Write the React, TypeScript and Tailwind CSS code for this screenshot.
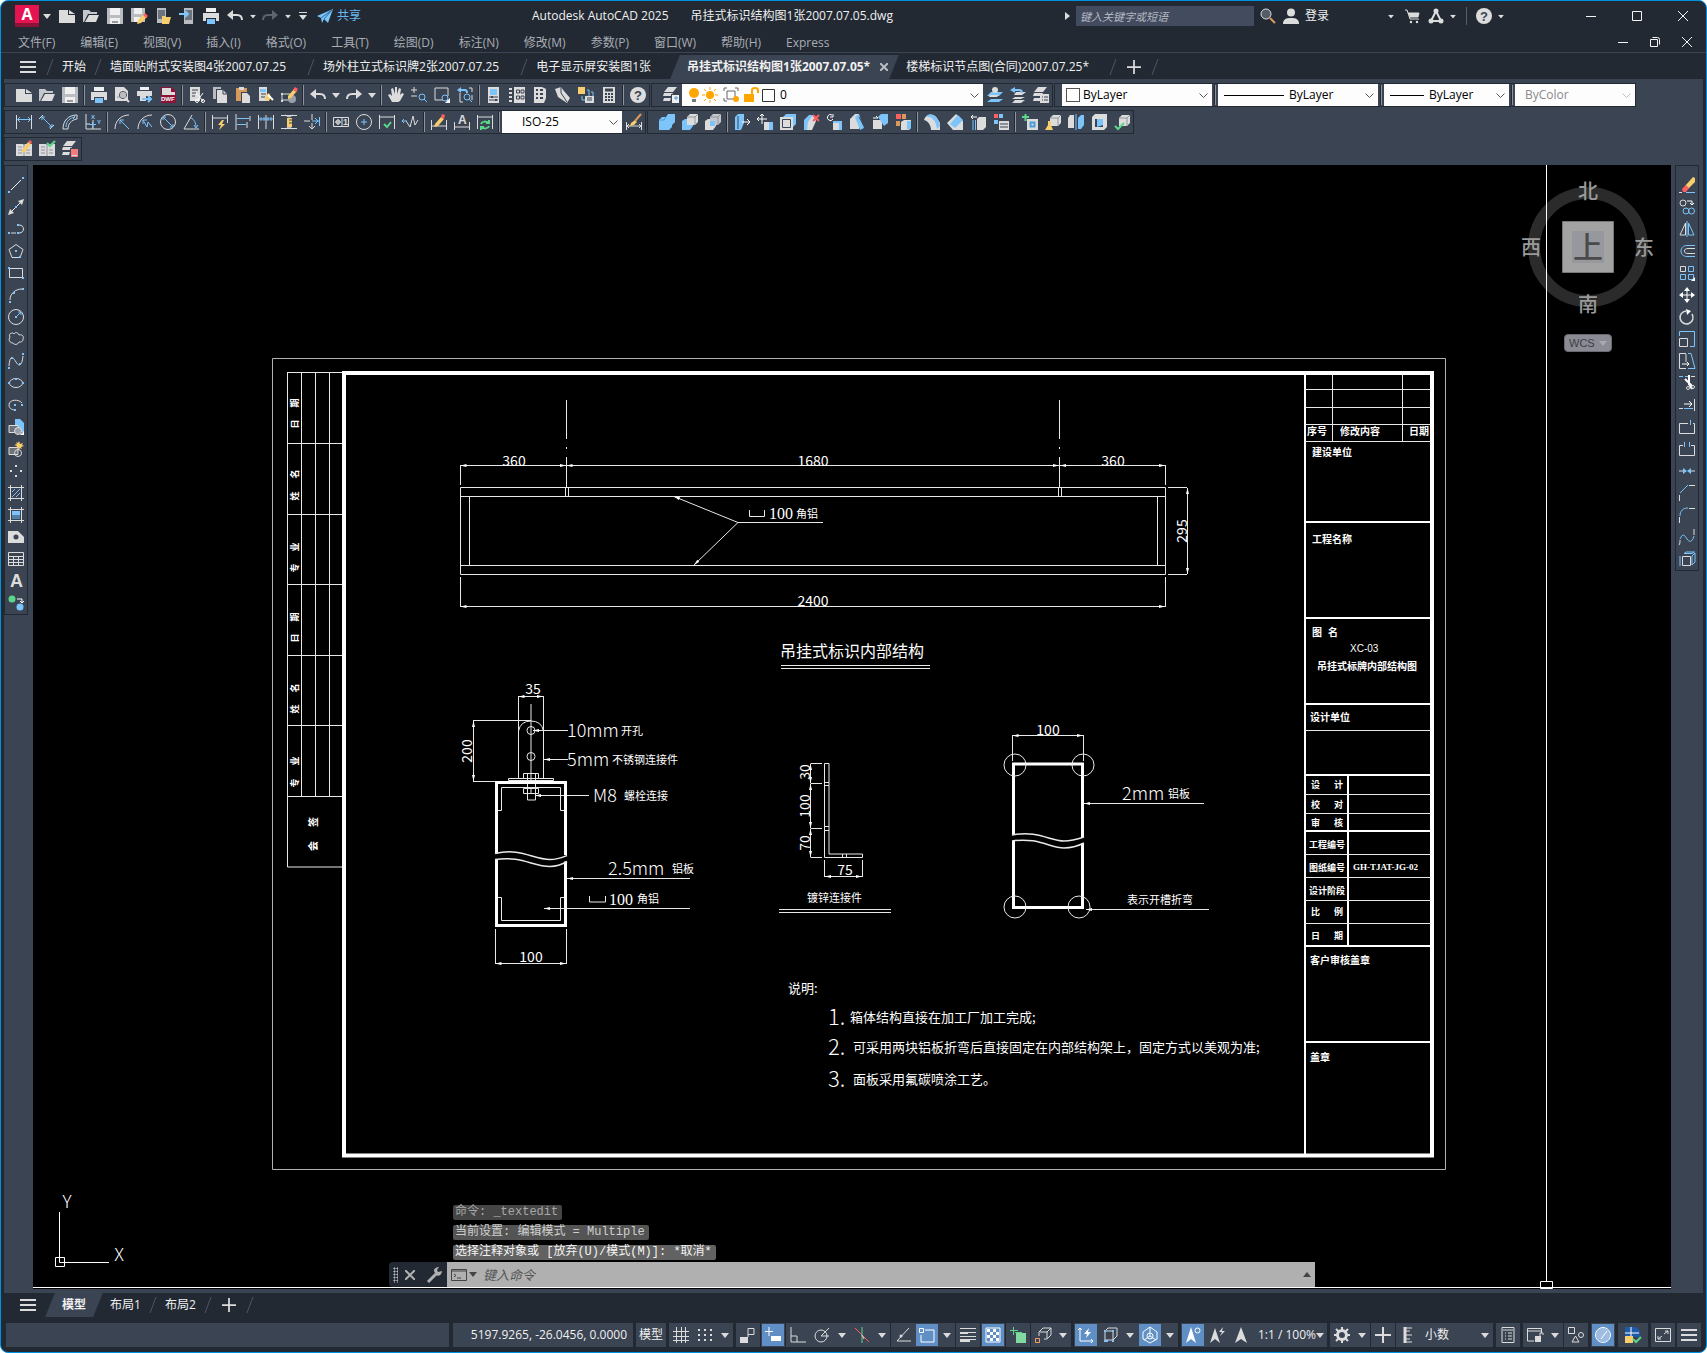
import React from "react";

const W = "#dcdcdc";
const B = "#7cc4fa";
const Y = "#f8cd6c";
const G = "#5bd68a";
const R = "#ff5f5f";
const D = "#3b4453";
const M = "#8f949c";

// s = stroked path, f = filled path, t = letter (text, color, size, x, y)
type Shape =
  | ["s", string, string?, number?]
  | ["f", string, string?]
  | ["t", string, string, number, number, number];

const circ = (x: number, y: number, r: number) =>
  `M${x - r} ${y}a${r} ${r} 0 1 0 ${r * 2} 0a${r} ${r} 0 1 0 ${-r * 2} 0z`;
const dot = (x: number, y: number) => `M${x - 1} ${y - 1}h2v2h-2z`;

const cubeBack: Shape[] = [
  ["f", "M5 4l3-3h8v8l-3 3H5z", W],
  ["s", "M5 4h8v8M13 4l3-3", M],
];
const sheets: Shape[] = [
  ["f", "M5 0h9l-4 5H1z", W],
  ["f", "M1 6h9l-2 3H0z", W],
  ["f", "M1 11h7l-1 3H0z", W],
];

const icons: Record<string, Shape[]> = {
  menu: [["s", "M0 3h16M0 8h16M0 13h16", W, 2]],
  new: [["f", "M0 2h9v5h7v8H0z"], ["f", "M10 2l6 4h-6z"]],
  open: [["f", "M0 2h6l2 2h6v2H5L1 14H0z", "#c4c7cb"], ["f", "M6 7h10l-3 7H2z"]],
  save: [["f", "M0 0h16v16H0z", "#b9bcc1"], ["f", "M3 0h10v7H3z", "#f0f0f0"], ["f", "M3 10h10v6H3z", "#f0f0f0"], ["s", "M5 14h6", D]],
  saveas: [["f", "M0 0h14v14H0z", "#b9bcc1"], ["f", "M3 0h8v6H3z", "#f0f0f0"], ["f", "M3 9h6v5H3z", "#f0f0f0"], ["f", "M7 12l6-6 3 3-6 6-4 1z", Y], ["f", "M12 7l2-2 3 3-2 2z", R]],
  openMobile: [["f", "M2 0h9v15H2z", "#b9bcc1"], ["f", "M3 2h7v9H3z", "#6d737c"], ["f", "M7 8h3l1 1h5l-2 7H7z", Y]],
  saveMobile: [["f", "M5 0h9v16H5z", "#b9bcc1"], ["f", "M6 2h7v10H6z", "#6d737c"], ["s", "M0 6h8M6 3l3 3-3 3", B, 2]],
  print: [["f", "M3 0h10v4H3z", "#f0f0f0"], ["f", "M0 5h16v8h-3v-3H3v3H0z", W], ["f", "M4 11h8v5H4z", B]],
  preview: [["f", "M1 0h9l4 4v10H1z"], ["s", "M3 10h3", M], ["s", circ(9, 8, 3.5), D, 1], ["f", circ(9, 8, 3), "#b9bcc1"], ["s", "M11 11l4 4", W, 2]],
  publish: [["f", "M3 0h9v3H3z", "#f0f0f0"], ["f", "M0 4h15v5H0z"], ["f", "M3 9h6v5H3z"], ["s", "M5 12h8M11 9l3 3-3 3", B, 2]],
  dwf: [["f", "M1 0h10l5 4v12H1z", "#8c1236"], ["f", "M2 1h9v4h4v3H2z", W], ["t", "DWF", "#fff", 6, 1, 14]],
  undo: [["s", "M4 7h6c3 0 5 2 5 5", W, 2], ["f", "M0 7l6-5v10z"]],
  redo: [["s", "M12 7H6c-3 0-5 2-5 5", "currentColor", 2], ["f", "M16 7l-6-5v10z", "currentColor"]],
  send: [["f", "M0 8L16 1l-5 14-4-4-2 4-1-5z", B], ["s", "M4 10L15 2 7 11", "#2b6c9c"]],
  search: [["f", circ(6, 6, 5), "#565c66"], ["s", circ(6, 6, 5), W], ["s", "M10 10l5 5", "#d79a5a", 2]],
  user: [["f", circ(8, 4.5, 4)], ["f", "M0 16c0-5 3-6 8-6s8 1 8 6z"]],
  cart: [["s", "M1 2h2l3 9h9M4 5h11l-1 4H5", W, 1], ["f", "M4 5h11l-1 4H6z"], ["f", circ(7, 14, 1.2)], ["f", circ(13, 14, 1.2)]],
  app: [["s", "M8 3L3 13h10zM8 3l5 10", W, 2], ["f", circ(8, 3, 2.5)], ["f", circ(3, 13, 2.5)], ["f", circ(13, 13, 2.5)]],
  help: [["f", circ(8, 8, 8)], ["t", "?", D, 13, 4, 13]],
  cut: [["f", "M1 0h10v14H1z"], ["s", "M3 3h6M3 6h4M3 9h3", D], ["s", "M7 6l7 8M14 6l-6 8", "#fff"], ["s", circ(14, 14, 1.5) + circ(8, 14, 1.5), "#fff"]],
  copy: [["f", "M1 0h8v2H4v10H1z", "#b9bcc1"], ["f", "M5 3h6l4 4v9H5z"], ["s", "M11 3v4h4", D]],
  paste: [["f", "M1 1h11v4H6v9H1z", "#d79a5a"], ["f", "M4 0h5v3H4z"], ["f", "M7 6h5l3 3v7H7z"]],
  match: [["f", "M1 0h8v8h2v6H1z"], ["f", "M2 2h6v3H2z", B], ["s", "M3 7h5M3 10h4", D], ["f", "M8 8l3-2 2 4-2 4-4-1z", Y], ["s", "M10 8l5 5", "#fff", 2]],
  block: [["s", "M1 7h8v6H1z", W], ["f", dot(1, 14) + dot(1, 7)], ["f", circ(11, 12, 4), "#9ba0a8"], ["f", "M7 9l6-7 3 2-6 7-3 1z", Y], ["f", "M12 3l2-3 3 2-2 3z", R]],
  pan: [["f", "M4 15L0 8l2-1 2 2-1-7 2-1 2 6V0h2v7l2-6 2 1-1 6 2-2 2 1-4 7-2 1z"]],
  zoomRt: [["s", "M3 0v6M0 3h6M0 9h6", W], ["s", circ(11, 10, 3), B], ["s", "M13 12l3 3", B]],
  zoomWin: [["s", "M1 13V1h13v8M1 13h8", W], ["s", circ(11, 11, 3), B], ["s", "M13 13l2 2", B], ["f", "M16 11v5h-5z", "#fff"]],
  zoomPrev: [["s", "M3 6v9h3M12 1h3v4M15 8v5", W], ["s", circ(10, 10, 3), B], ["s", "M12 12l3 3", B], ["s", "M2 3h6c2 0 2 2 2 3", B, 2], ["f", "M0 3l4-3v6z", B]],
  props: [["f", "M2 0h11v16H2z"], ["f", "M4 2h7v6H4z", B], ["s", "M3 10h9M3 13h9", D], ["s", "M6 9v2M10 12v2", D, 2]],
  design: [["f", "M5 0h11v16H5zM0 1h3v2H0zM0 5h3v2H0zM0 9h3v2H0zM0 13h3v2H0z"], ["s", "M7.500 3h3v3h-3zM12 3h3v3h-3zM7.500 9h3v3h-3zM12 9h3v3h-3z", D]],
  palette: [["f", "M2 0h8l4 2v9l-2 5H2z"], ["s", "M4 3h2M8 3h3M4 7h2M8 7h3M4 11h2M8 11h3", D, 2]],
  sheetSet: [["f", "M0 2l6-2 3 4 6 7-3 5-9-6z"], ["s", "M6 0v6l6 9", D]],
  markup: [["f", "M0 0h7v7H0z", Y], ["s", "M9 3h2v6M13 5h2v4M4 9v4h3", B], ["f", "M7 9h9v7H7z"], ["s", "M9 11h5M9 13h5", D]],
  calc: [["f", "M2 0h12v16H2z"], ["s", "M4 3h8", D, 3], ["s", "M4 7h2M7 7h2M10 7h2M4 10h2M7 10h2M10 10h2M4 13h2M7 13h2M10 13h2", D, 2]],

  layerProps: [...sheets, ["f", "M8 7h8v9H8z", D], ["f", "M9 8h7v8H9z", "#f0f0f0"], ["s", "M11 11h4M13 9v4", "#4d9bd6"]],
  layerMake: [["f", "M4 5h12l-4 4H0zM4 12h12l-4 3H0z", B], ["f", circ(8, 3, 3)], ["f", "M3 8h9l-2 2H2z"]],
  layerPrev: [["f", "M6 5h10l-4 3H4zM5 10h10l-4 2H2zM5 13h10l-4 3H2z"], ["s", "M3 3h6c3 0 3 2 3 3", B, 2], ["f", "M0 3l5-3v6z", B]],
  layerState: [...sheets, ["f", "M7 7h9v9H7z"], ["s", "M9 10h1M11 10h4M9 13h1M11 13h4", D]],

  dimLinear: [["s", "M.5 1v14M15.500 1v14", W], ["s", "M2 5.500h12M4 3L1.500 5.500 4 8M12 3l2.500 2.500L12 8", B]],
  dimAligned: [["s", "M0 5l4-4M11 15l4-4", W], ["s", "M3 3l10 10M3 6V3h3M13 10v3h-3", B]],
  dimArc: [["s", "M1 15h5M1 15C1 7 6 1 15 1v4M6 15c0-5 3-9 9-10", W], ["s", "M4 13C4 7 8 4 13 3M11 1l2 2-2 2", B]],
  dimOrd: [["s", "M1 0v15h15M8 6v9M1 10h4", W], ["t", "X", B, 6, 6, 5], ["t", "Y", B, 6, 12, 10], ["s", "M4 10.500h7M7.500 8v6", B]],
  dimRadius: [["s", "M1 15C1 7 7 1 15 1", W], ["s", "M6 6l9 9M6 10V6h4", B]],
  dimJog: [["s", "M1 15C1 7 7 1 15 1", W], ["s", "M6 6l4 7 1-5 4 5M6 10V6h4", B]],
  dimDia: [["s", circ(8, 8, 7.5), W], ["s", "M3 3l10 10M3 6V3h3M13 10v3h-3", B]],
  dimAngle: [["s", "M9 1L1 15h15", W], ["s", "M8 4c3 1 5 5 5 9M11 11l2 3 2-3", B]],
  dimQuick: [["s", "M.5 1v14M15.500 1v8M1 4h14", W], ["f", "M10 6l-4 5h3l-2 5 6-6h-3l2-4z", Y]],
  dimBase: [["s", "M1 0v16M15 2v5M12 8v6", W], ["s", "M2 4.500h12M2 10.500h9", B]],
  dimCont: [["s", "M.5 1v14M8 1v14M15.500 1v14", W], ["s", "M1 5h14M3 3v4M6 3v4M10 3v4M13 3v4", B]],
  dimSpace: [["s", "M0 1.500h16M0 14.500h16M4 1l4 2 4-2M4 15l4-2 4 2", W], ["f", "M6 4h5v9H6z", Y], ["s", "M8 6h3M8 9h3", D]],
  dimBreak: [["s", "M8 0v6M8 9v6M0 7h6M5 12l3 3 3-3", W], ["s", "M8 7h7M11 4l3 3-3 3M15.500 3v9", B]],
  tol: [["s", "M.5 3.500h15v9H.5zM9 4v8", W], ["s", circ(5, 8, 2) + "M5 5v6M2 8h6", W], ["t", "1", W, 9, 10, 11]],
  center: [["s", circ(8, 8, 7.5), W], ["s", "M8 5v6M5 8h6", B]],
  inspect: [["s", "M.5 1v14M15.500 1v14M1 3h14", W], ["s", "M5 10l3 3 4-5", G, 2]],
  jogLine: [["s", "M4 7l4 6 3-11 2 9 3-5", W], ["s", "M0 7h5M2 5L0 7l2 2", B]],
  dimEdit: [["s", "M.5 6v10M15.500 6v10M1 12h14", W], ["f", "M4 10l6-7 3 2-6 7-4 1z", Y], ["f", "M10 3l1-3 3 1-1 4z", R]],
  dimTedit: [["s", "M.5 8v8M15.500 8v8M1 13h14", W], ["t", "A", W, 12, 4, 10]],
  dimUpdate: [["s", "M.5 1v14M15.500 1v14M1 3h14", W], ["s", "M4 10c1-3 5-3 8-1M12 12c-1 3-5 3-8 1M12 6v3H9M4 16v-3h3", G, 2]],
  dimStyle: [["s", "M.5 8v8M15.500 8v8M1 12h14M3 10l-2 2 2 2M13 10l2 2-2 2", W], ["f", "M5 9l4-3 2 2-3 3-4 1z", Y], ["s", "M9 7l6-7", "#d79a5a", 2]],

  union: [["f", "M0 6l3-3h4l2-3h7v8l-3 3v2l-3 3H0z", B], ["s", "M0 6h5l2-3", "#4d9bd6"]],
  subtract: [["f", "M0 7l3-2h8v7l-3 4H0z", B], ["f", "M5 3l3-3h8v8l-3 3H5z", W], ["s", "M5 3h8v8M13 3l3-3", M]],
  intersect: [["f", "M0 7l3-2h8v7l-3 4H0z", W], ["f", "M5 3l3-3h8v8l-3 3H5z", "#c4c7cb"], ["s", "M5 3h8v8M13 3l3-3", M], ["f", "M5 7h5v5H5z", B]],
  extrude: [["f", "M1 3l3-3h6v9l-3 7H1z", B], ["s", "M4 2v13", D], ["s", "M8 8h7M13 5l3 3-3 3", "#fff"]],
  moveFace: [["f", "M7 8h8v8H7z", W], ["f", "M12 8h4v8h-4z", B], ["s", "M5 0v10M0 5h10M3 2l2-2 2 2M2 3L0 5l2 2", "#fff"]],
  offsetFace: [["f", "M3 3l3-3h10v10l-3 3z", B], ["f", "M0 3h13v13H0z", W], ["s", "M2.500 5.500h8v8h-8z", D]],
  deleteFace: [["f", "M1 6l5-5h4l-2 15H1z", B], ["f", "M5 8l5-7 3 6-4 9H4z", W], ["s", "M10 1l6 6M16 1l-6 6", R, 2]],
  rotateFace: [["s", "M6 1a3 3 0 1 0 1 4M7 0v3H4", "#fff"], ["f", "M7 7h9v9H7z", B], ["f", "M7 9h6v7H7z", W]],
  taperFace: [["f", "M1 5l5-5h4v15H1z", W], ["f", "M6 3l4-3 5 14-4 2z", B], ["s", "M10 3l5 9", D]],
  copyFace: [["f", "M1 6h9v9H1z", W], ["f", "M6 3l3-3h7v9l-4 3z", B], ["s", "M1 4h5M4 2l2 2", "#fff"]],
  colorFace: [["f", "M1 0h5v5H1z", R], ["f", "M7 0h4v5H7zM1 7h4v5H1z", "#d79a5a"], ["f", "M6 8l3-2h7v8l-2 2H6z", W], ["f", "M12 7h4v7l-4 2z", B]],
  filletEdge: [["f", "M0 6c2-7 10-7 13-2l3 5v7H7C7 11 4 7 0 6z", W], ["f", "M2 3c6-1 10 4 11 12l3-3C15 5 10-1 4 1z", B]],
  chamferEdge: [["f", "M0 9l9-9 7 7v9H6z", W], ["f", "M3 10L11 1l5 5-8 8z", B]],
  copyEdge: [["s", "M1 3h6M3 1L1 3l2 2", "#fff"], ["f", "M7 5l2-2h7v10l-3 3H7z", W], ["s", "M3 6v10M5.500 6v10", B]],
  colorEdge: [["f", "M1 0h4v4H1z", R], ["f", "M6 0h4v4H6zM1 6h4v4H1z", B], ["f", "M6 7h10v9H6z", W], ["s", "M7 10h8M7 13h8", D]],
  imprint: [["f", "M5 5h11v11H5z", W], ["s", "M8.500 8.500h4v4h-4z", "#4d9bd6", 2], ["s", "M0 3h7M3.500 0v7", G, 2]],
  clean: [...cubeBack, ["f", "M3 7h3v4l2 5H0l3-5z", Y]],
  separate: [["f", "M0 4l2-3h4v13H0z", W], ["f", "M10 4l3-3h3v10l-3 4h-3z", B], ["s", "M8 0v16", B]],
  shell: [["f", "M1 3l3-3h12v13l-3 3H1z", W], ["f", "M4 5h8v8H4z", D], ["f", "M6 5h6v6l-6 2z", B]],
  check: [...cubeBack, ["s", "M1 12l3 3 6-6", G, 2]],
  refEdit: [["f", "M0 3h7l1 1 1-1h7v12H0z", W], ["s", "M8 4v11M2 6h4M2 9h4M2 12h4M10 9h4M10 12h4", M], ["f", "M6 9l6-8 3 2-6 8-3 1z", Y], ["f", "M12 1l2-2 2 2-1 2z", R]],
  refSave: [["f", "M0 3h7l1 1 1-1h7v12H0z", W], ["s", "M8 4v11M2 6h4M2 9h4M2 12h4M10 9h4M10 12h4", M], ["s", "M8 2l3 3 5-5", G, 2]],
  refDiscard: [...sheets, ["f", "M8 7h8v9H8z", D], ["f", "M9 8h7v8H9z", "#f47c7c"], ["s", "M10 14.500h5", W]],

  line: [["s", "M3 13L13 3", "#f0f0f0"], ["f", dot(1, 15) + dot(15, 1), B]],
  xline: [["s", "M1 15L15 1", "#f0f0f0"], ["f", "M16 0l-2 6-4-4zM0 16l2-6 4 4z"], ["f", dot(8, 8), B]],
  pline: [["s", "M3 12h5M11 4c6 0 6 8 0 8", W], ["f", dot(1, 12) + dot(10, 12) + dot(10, 4), B]],
  polygon: [["s", "M8 1.500l7 5-3 8H4l-3-8z"], ["f", dot(8, 8) + dot(12, 14), B]],
  rect: [["s", "M1.500 3.500h13v9h-13z"], ["f", dot(1, 3) + dot(15, 13), B]],
  arc: [["s", "M2 13c0-6 5-11 12-11"], ["f", dot(2, 15) + dot(6, 6) + dot(15, 2), B]],
  circle: [["s", circ(8, 8, 7.5)], ["f", dot(8, 8), B], ["s", "M9 7l4-4M10 3h3v3", B]],
  cloud: [["s", "M2 6c-2-4 3-5 4-3 1-2 4-2 5 1 4-1 5 2 4 4 0 3-2 3-4 3-1 3-5 3-6 1-3 0-5-3-3-6z"]],
  spline: [["s", "M1 13c1-12 4-9 7-4s6 4 7-6"], ["f", dot(1, 15) + dot(4, 5) + dot(12, 11) + dot(15, 1), B]],
  ellipse: [["s", "M1.500 8a6.500 4.500 0 1 0 13 0a6.500 4.500 0 1 0-13 0"], ["f", dot(1, 8) + dot(15, 8) + dot(8, 4), B]],
  ellArc: [["s", "M14 6C11 2 1 2 1 8c0 4 4 5 6 5"], ["f", dot(14, 8) + dot(7, 8) + dot(7, 13), B]],
  insert: [["f", "M7 0h5l4 4v9H7z", B], ["f", "M1 6h9v8H1z", "#6d737c"], ["s", "M1 6.500h9v7H1z", W], ["f", circ(10, 12, 3.5), "#9ba0a8"], ["s", circ(10, 12, 3.5), W], ["f", "M16 12v4h-4z", "#fff"]],
  makeBlock: [["f", "M1 6h9v8H1z", "#6d737c"], ["s", "M1 6.500h9v7H1z", W], ["s", circ(10, 12, 3.5), W], ["f", "M11 0l1 3 3-1-1 2 2 1-3 1 1 2-2-1-1 2-1-3-2 1 1-2-3-1 3-1-1-2 2 1z", Y]],
  point: [["f", dot(8, 3) + dot(3, 8) + dot(13, 8) + dot(8, 13)]],
  hatch: [["s", "M0 2.500h16M0 13.500h16M2.500 0v16M13.500 0v16"], ["s", "M4 7l3-3M4 12l8-8M8 12l4-4", B]],
  gradient: [["f", "M4 4h8v4H4z", B], ["f", "M4 8h8v4H4z", "#527ea8"], ["s", "M0 2.500h16M0 13.500h16M2.500 0v16M13.500 0v16"]],
  region: [["f", "M0 2h10l6 6v6H0z"], ["f", circ(8, 8, 2.5), D]],
  table: [["s", "M.5 1.500h15v13H.5zM1 5.500h14M1 8.500h14M1 11.500h14M5.500 5v9M10.500 5v9"]],
  mtext: [["t", "A", W, 18, 2, 14]],
  addSel: [["f", circ(4, 4, 3.5), G], ["f", circ(12, 12, 3.5), B], ["s", "M9 4h5v4M12 6l2 2 2-2", "#fff"]],

  erase: [["f", "M6 9l8-9 2 1v4l-7 7z", Y], ["f", "M3 12l4-4 3 3-3 4H4z", R], ["s", "M0 15.500h3", W], ["s", "M7 15.500h9", B]],
  copyObj: [["s", circ(4, 4, 3), W], ["s", "M8 2h5v4M11 4l2 2 2-2", "#fff"], ["s", circ(7, 12, 3) + circ(12.5, 12, 3), B]],
  mirror: [["s", "M6.500 2v12H1z", W], ["s", "M9.500 2v12H15z", B], ["s", "M8 0v16", B]],
  offset: [["s", "M16 2.500H8c-8 0-8 11 0 11h8", B], ["s", "M16 5.500H9c-5 0-5 5 0 5h7", W]],
  array: [["s", "M1.500 1.500h5v5h-5z", W], ["s", "M9.500 1.500h5v5h-5zM1.500 9.500h5v5h-5zM9.500 9.500h5v5h-5z", B], ["f", "M16 12v4h-4z", "#fff"]],
  move: [["s", "M8 1v14M1 8h14", "#fff"], ["f", "M8 0l3 4H5zM8 16l3-4H5zM0 8l4-3v6zM16 8l-4-3v6z", "#fff"]],
  rotate: [["s", "M7 2a6.500 6.500 0 1 0 6 3", W, 1.5], ["f", "M7 0l5 2-4 4z", "#fff"]],
  scale: [["s", "M.5 5V.5h15v15H11", B], ["s", "M.5 7.500h8v8h-8z", W]],
  stretch: [["s", "M7 .5H.5v15H7M7 1v8", W], ["s", "M9 .5h3l4 15H9", B], ["s", "M3 11h7M8 9l2 2-2 2", "#fff"]],
  trim: [["s", "M0 1.500h4M6 1.500h3", B], ["s", "M12 1.500h4", W], ["s", "M10 0v9l3 5M6 4l7 7", "#fff", 2], ["s", circ(14, 12, 1.5) + circ(9, 13, 1.5), W]],
  extend: [["s", "M15.500 2v12M0 11.500h4", W], ["s", "M5 11.500h9", B], ["s", "M5 7h8M10 4l3 3-3 3", "#fff"]],
  breakAt: [["s", "M9 4.500H.5v10h15v-10H14", W], ["s", "M11.500 1v5", B]],
  breakObj: [["s", "M4 4.500H.5v10h15v-10H12", W], ["s", "M5.500 1v5M10.500 1v5", B]],
  join: [["s", "M0 8h5M11 8h5", W], ["f", "M4 5l4 3-4 3zM12 5L8 8l4 3z", B]],
  chamfer: [["s", "M.5 16v-6M10 .5h6", W], ["s", "M1 8l8-8", B]],
  fillet: [["s", "M.5 16v-6M10 1.500h6", W], ["s", "M1 9c0-5 3-8 8-8", B]],
  blend: [["s", "M0 16c1-1 1-3 1-5M15 0v6", W], ["s", "M1 10c3-7 5-3 7 0s5 4 7-3", B]],
  explode: [["s", "M3.500 5.500h8v9h-8z", W], ["s", "M1 5v10M5 2.500h8L15.500 1H7zM13 5l3-3v9l-3 3z", B]],

  grid: [["s", "M0 4.500h16M0 9.500h16M0 13.500h16M3.500 0v16M8.500 0v16M12.500 0v16"]],
  dots: [["f", dot(2, 3) + dot(8, 3) + dot(14, 3) + dot(2, 8) + dot(8, 8) + dot(14, 8) + dot(2, 13) + dot(8, 13) + dot(14, 13)]],
  infer: [["f", "M0 10h8v6H0z"], ["s", "M8 10V1.500h6v6H8", W]],
  dyn: [["s", "M4 0v9M0 4.500h8", "#fff"], ["f", "M6 9h10v5H6z", "#fff"]],
  ortho: [["s", "M1 0v15h15M1 9h6v6", W]],
  polar: [["s", circ(7, 9, 6), W], ["s", "M7 9h8M7 9l8-8", W]],
  iso: [["s", "M1 1l14 14", R], ["s", "M8 0v16", G], ["s", "M8 8l2 4", W]],
  track: [["s", "M14 1L2 14h14", W], ["f", circ(6, 9, 1.5), W]],
  osnap: [["s", "M6 3h9v12H2V8", "#fff"], ["s", "M0.500 1.500h4v4h-4z", "#fff"]],
  lwt: [["f", "M0 1h16v1H0zM0 5h8v2H0zM8 5h8v1H8zM0 9h16v1H0zM0 12h10v3H0zM10 12h6v1h-6z"]],
  transp: [["s", "M1 1h14v14H1z", "#fff"], ["f", "M2 2h3v3H2zM8 2h3v3H8zM5 5h3v3H5zM11 5h3v3h-3zM2 8h3v3H2zM8 8h3v3H8zM5 11h3v3H5zM11 11h3v3h-3z", "#fff"]],
  cycle: [["f", "M6 6h10v10H6z", "#81d8a0"], ["s", "M3.500 0v8M0 3.500h8M5 5.500h7", G]],
  osnap3d: [["s", "M4 5l4-4h8v7l-4 4H9M5 5h7v6M12 5l4-4M4 5v4", W], ["s", "M.5 11.500h4v4h-4z", "#f0a066"]],
  ucs: [["s", "M2 1v13h13M0 3l2-2 2 2M13 12l2 2-2 2", "#fff"], ["f", "M11 1L6 7h3l-1 4 5-6h-3z", "#fff"]],
  selFilter: [["s", "M3 4h8v9H3zM3 4l3-3h9v8l-4 4", W], ["f", dot(3, 4) + dot(11, 4) + dot(3, 14) + dot(11, 14), B], ["s", "M2 14h4", B, 2]],
  gizmo: [["s", "M8 0l7 5v7l-7 4-7-4V5zM8 1v8M8 9l6 4M8 9l-6 4", "#fff"], ["s", circ(8, 9, 3), "#fff"]],
  annoVis: [["f", "M6 0l5 16-5-4-5 4z", "#fff"], ["s", circ(12.5, 3.5, 2.5), "#fff"]],
  annoAuto: [["f", "M6 1l5 15-5-4-5 4z"], ["f", "M14 0l-4 5h3l-2 4 5-5h-3z"]],
  anno: [["f", "M8 0l6 16-6-4-6 4z"]],
  gear: [["s", circ(8, 8, 4.5), W, 3], ["s", "M8 0v3M8 13v3M0 8h3M13 8h3M2 2l3 3M11 11l3 3M14 2l-3 3M5 11l-3 3", W, 2]],
  plus: [["s", "M8 0v16M0 8h16", W, 2]],
  ruler: [["s", "M5 0v16", W, 3], ["s", "M6 1h6M6 4h4M6 8h6M6 12h4M6 15h6", W]],
  qprops: [["s", "M2 .5h12v15H2zM3 3h10", W], ["s", "M5 6h1M8 6h4M5 9h1M8 9h4M5 12h1M8 12h4", W]],
  lockUi: [["s", "M7 14H.5V1.500h14V6M1 4h13", W], ["f", "M8 9h6v6H8z"], ["s", "M13 9V6h3v2", W]],
  isolate: [["s", "M.5.5h6v6h-6z", W], ["s", circ(13, 8, 2.5), W], ["s", "M4 15h7L7.500 9z", W]],
  perf: [["f", circ(8, 8, 7), "#9fbde2"], ["s", circ(8, 8, 7.5), "#fff"], ["s", "M6 12l6-8", "#fff"]],
  trusted: [["f", "M0 0h11l4 4v6H0z", "#1d5aa8"], ["f", "M0 9h8v7H0z", Y], ["s", "M0 6h14M6 0v9", "#fff"], ["s", "M8 12l3 3 5-5", G, 2]],
  full: [["s", "M.5 1.500h15v13H.5z", W], ["s", "M9 7l4-3M10 4h3v3M7 9l-4 3M3 9v3h3", W]],
  wrench: [["s", "M2 15l8-8", "#b0b0b0", 3], ["f", "M8 4c0-3 3-4 5-4l-2 3 1 2 4-1c0 4-4 6-6 4z", "#b0b0b0"]],
  redoW: [["s", "M12 7H6c-3 0-5 2-5 5", W, 2], ["f", "M16 7l-6-5v10z"]],
};

function Icon({ name, size = "size-4" }: { name: string; size?: string }) {
  return (
    <svg viewBox="0 0 16 16" className={`${size} shrink-0 overflow-visible`} aria-hidden="true">
      {icons[name].map((s, i) => {
        if (s[0] === "t") {
          return (
            <text key={i} x={s[4]} y={s[5]} fontSize={s[3]} fill={s[2]} fontWeight="700" fontFamily="Liberation Sans">
              {s[1]}
            </text>
          );
        }
        if (s[0] === "f") return <path key={i} d={s[1]} fill={s[2] ?? W} />;
        return <path key={i} d={s[1]} fill="none" stroke={s[2] ?? W} strokeWidth={s[3] ?? 1} />;
      })}
    </svg>
  );
}

function Caret({ className = "text-[#dcdcdc]" }: { className?: string }) {
  return (
    <svg viewBox="0 0 8 5" className={`w-2 h-[5px] shrink-0 ${className}`} aria-hidden="true">
      <path d="M0 0h8L4 5z" fill="currentColor" />
    </svg>
  );
}

function Btn({ name, className = "w-[23px] pl-1" }: { name: string; className?: string }) {
  return (
    <button aria-label={name} className={`flex h-full shrink-0 items-center ${className}`}>
      <Icon name={name} />
    </button>
  );
}

// "|" is a separator, "v" a drop-down caret, anything else an icon name
function Tools({ list }: { list: string }) {
  return (
    <>
      {list.split(" ").map((n, i) => {
        if (n === "|") return <Sep key={i} />;
        if (n === "v") {
          return (
            <button key={i} aria-label="more" className="flex w-[13px] justify-center">
              <Caret />
            </button>
          );
        }
        return <Btn key={i} name={n} />;
      })}
    </>
  );
}

function Sep() {
  return (
    <div className="flex w-1.5 shrink-0 justify-center self-stretch py-px">
      <div className="w-0.5 border-l border-[#222933] bg-[#8f949c]" />
    </div>
  );
}

function Bar({ children }: { children: React.ReactNode }) {
  return (
    <div className="flex h-6 shrink-0 items-center border border-[#222933]">
      <div className="ml-[2px] mr-px h-[18px] w-1 bg-[radial-gradient(#b9bcc1_40%,transparent_50%)] bg-[size:2px_2px]" />
      {children}
    </div>
  );
}

function Combo({
  label,
  text,
  width,
  pad,
  muted = false,
  children,
}: {
  label: string;
  text: string;
  width: string;
  pad: string;
  muted?: boolean;
  children?: React.ReactNode;
}) {
  return (
    <div className={`relative flex h-[22px] shrink-0 items-center bg-[#fdfdfd] ${width}`}>
      <select
        aria-label={label}
        disabled={muted}
        className={`h-full w-full appearance-none text-xs opacity-100 outline-none ${pad} ${muted ? "text-[#8a8a8a]" : "text-black"}`}
      >
        <option>{text}</option>
      </select>
      <div className="pointer-events-none absolute inset-y-0 left-0 flex items-center">{children}</div>
      <svg viewBox="0 0 9 5" className={`pointer-events-none absolute right-1 h-[5px] w-[9px] ${muted ? "text-[#c0c0c0]" : "text-[#555]"}`}>
        <path d="M.5.5l4 4 4-4" fill="none" stroke="currentColor" />
      </svg>
    </div>
  );
}

function Slash() {
  return (
    <svg viewBox="0 0 8 16" className="-mx-1 h-4 w-2 shrink-0" aria-hidden="true">
      <path d="M1 16L7 0" stroke="#4d5666" fill="none" />
    </svg>
  );
}

function ActiveBg() {
  return <div className="absolute inset-0 -skew-x-[22deg] bg-[#3b4453]" />;
}

function SmallCaret({ className = "w-[11px]" }: { className?: string }) {
  return (
    <div className={`flex justify-center ${className}`}>
      <Caret className="scale-75 text-[#dcdcdc]" />
    </div>
  );
}

function TitleBar() {
  return (
    <header className="relative flex h-[30px] shrink-0 items-center">
      <button aria-label="Autodesk" className="ml-3.5 flex h-[22px] w-6 items-center justify-center border-b-4 border-[#8c1236] bg-[#e5134f] text-base font-bold leading-none text-white">
        A
      </button>
      <div className="flex w-4 justify-center">
        <Caret />
      </div>
      {["new", "open", "save", "saveas", "openMobile", "saveMobile", "print", "undo"].map((n) => (
        <Btn key={n} name={n} className="w-6 justify-center" />
      ))}
      <SmallCaret />
      <button aria-label="redo" className="flex w-6 justify-center text-[#5d6470]"><Icon name="redo" /></button>
      <SmallCaret />
      <button aria-label="customize" className="flex w-5 flex-col items-center gap-0.5">
        <div className="h-px w-2 bg-[#dcdcdc]" />
        <Caret />
      </button>
      <button className="flex items-center gap-1 pl-1 text-xs text-[#6ab8f2]">
        <Icon name="send" />
        共享
      </button>
      <h1 className="absolute left-[531px] flex gap-[22px] text-xs text-[#f0f0f0]">
        <span>Autodesk AutoCAD 2025</span>
        <span>吊挂式标识结构图1张2007.07.05.dwg</span>
      </h1>
      <div className="ml-auto flex h-full items-center">
        <svg viewBox="0 0 5 8" className="mr-1.5 h-2 w-[5px]"><path d="M0 0l5 4-5 4z" fill={W} /></svg>
        <input
          aria-label="搜索"
          placeholder="键入关键字或短语"
          className="h-5 w-[178px] bg-[#434b5e] pl-1 text-[11px] italic outline-none placeholder:text-[#b4b9c2]"
        />
        <Btn name="search" className="w-[29px] justify-center" />
        <button className="flex items-center gap-1.5 text-xs text-[#f0f0f0]">
          <Icon name="user" />
          登录
        </button>
        <SmallCaret className="ml-14 mr-[3px] w-3" />
        <Btn name="cart" className="w-6 justify-center" />
        <Btn name="app" className="w-6 justify-center" />
        <SmallCaret className="w-2.5" />
        <div className="mx-2 h-[18px] w-px bg-[#565e6b]" />
        <Btn name="help" className="w-[18px] justify-center" />
        <SmallCaret className="w-4" />
        <WinBtn label="最小化" d="M0 5.500h10" className="ml-[59px] w-[46px]" />
        <WinBtn label="最大化" d="M.5 .5h9v9h-9z" className="w-[46px]" />
        <WinBtn label="关闭" d="M0 0l10 10M10 0L0 10" className="w-[46px]" />
      </div>
    </header>
  );
}

function WinBtn({ label, d, className }: { label: string; d: string; className: string }) {
  return (
    <button aria-label={label} className={`flex h-full items-center justify-center ${className}`}>
      <svg viewBox="0 0 10 10" className="size-2.5 overflow-visible">
        <path d={d} stroke="#f4f4f4" fill="none" />
      </svg>
    </button>
  );
}

const menus = ["文件(F)", "编辑(E)", "视图(V)", "插入(I)", "格式(O)", "工具(T)", "绘图(D)", "标注(N)", "修改(M)", "参数(P)", "窗口(W)", "帮助(H)", "Express"];

function MenuBar() {
  return (
    <nav className="flex h-[22px] shrink-0 items-center border-b border-[#3b4453] pl-[17px] text-xs text-[#a9adb3]">
      <div className="flex gap-[25px] pt-0.5">
        {menus.map((m) => (
          <button key={m}>{m}</button>
        ))}
      </div>
      <div className="ml-auto flex h-full pr-[3px]">
        <WinBtn label="最小化文档" d="M0 5.500h10" className="w-8" />
        <WinBtn label="还原文档" d="M.5 2.500h7v7h-7zM2.500.5h5q2 0 2 2v5" className="w-8" />
        <WinBtn label="关闭文档" d="M0 0l10 10M10 0L0 10" className="w-8" />
      </div>
    </nav>
  );
}

const files = ["墙面贴附式安装图4张2007.07.25", "场外柱立式标识牌2张2007.07.25", "电子显示屏安装图1张"];

function FileTabs() {
  return (
    <nav className="mt-0.5 flex h-6 shrink-0 items-center pl-[19px] text-xs whitespace-nowrap text-[#f0f0f0]">
      <button aria-label="菜单" className="mr-3.5"><Icon name="menu" /></button>
      <Slash />
      <button className="px-3">开始</button>
      {files.map((f, i) => (
        <React.Fragment key={f}>
          <Slash />
          <button className={i === 2 ? "pl-3 pr-6" : "pl-3 pr-[25px]"}>{f}</button>
        </React.Fragment>
      ))}
      <div className="relative flex h-full items-center gap-2.5 pl-3 pr-1.5">
        <ActiveBg />
        <button className="relative font-bold">吊挂式标识结构图1张2007.07.05*</button>
        <button aria-label="关闭" className="relative">
          <svg viewBox="0 0 8 8" className="size-2"><path d="M0 0l8 8M8 0L0 8" stroke="#b9bcc1" strokeWidth="2" /></svg>
        </button>
      </div>
      <button className="pl-3 pr-6">楼梯标识节点图(合同)2007.07.25*</button>
      <Slash />
      <button aria-label="新建" className="px-3.5"><Icon name="plus" size="size-3.5" /></button>
      <Slash />
    </nav>
  );
}

function ToolRows() {
  return (
    <div className="flex shrink-0 flex-col gap-[3px] py-1">
      <div className="flex gap-px">
        <Bar>
          <Tools list="new open save | print preview publish dwf | cut copy paste match block | undo v redoW v | pan zoomRt zoomWin zoomPrev | props design palette sheetSet markup calc | help" />
        </Bar>
        <Bar>
          <Btn name="layerProps" />
          <Combo label="图层" text="0" width="w-[301px]" pad="pl-[98px]">
            <svg viewBox="0 0 92 16" className="ml-1 h-4 w-[92px]">
              <circle cx="8" cy="6" r="5" fill="#ffa500" />
              <path d="M6 12h4v3H6z" fill="#777" />
              <circle cx="24" cy="8" r="4" fill="#ffa500" />
              <path d="M24 0v3M24 13v3M16 8h3M29 8h3M18 2l2 2M28 12l2 2M30 2l-2 2M20 12l-2 2" stroke="#ffa500" />
              <path d="M38 4V1h3M49 1h3v3M38 11v3h3M41 4h8v8h-8z" stroke="#666" fill="none" />
              <circle cx="50" cy="12" r="3" fill="#ffa500" />
              <path d="M58 7h10v8H58z" fill="#ffa500" />
              <path d="M66 7V3q0-2 3-2t3 2v3" stroke="#ffa500" strokeWidth="2" fill="none" />
              <path d="M76.500 2.500h12v12h-12z" stroke="#333" fill="#fff" />
            </svg>
          </Combo>
          <Tools list="layerMake layerPrev layerState" />
        </Bar>
        <Bar>
          <Combo label="颜色" text="ByLayer" width="w-[150px]" pad="pl-[21px]">
            <div className="ml-1 size-3.5 border border-[#555] bg-white" />
          </Combo>
          <Sep />
          <Combo label="线型" text="ByLayer" width="w-40" pad="pl-[71px]">
            <div className="ml-1.5 h-px w-[60px] bg-black" />
          </Combo>
          <Sep />
          <Combo label="线宽" text="ByLayer" width="w-[125px]" pad="pl-[45px]">
            <div className="ml-1.5 h-px w-[34px] bg-black" />
          </Combo>
          <Sep />
          <Combo label="打印样式" text="ByColor" width="w-[120px]" pad="pl-2.5" muted />
        </Bar>
      </div>
      <div className="flex gap-px">
        <Bar>
          <Tools list="dimLinear dimAligned dimArc dimOrd | dimRadius dimJog dimDia dimAngle | dimQuick dimBase dimCont dimSpace dimBreak | tol center inspect jogLine | dimEdit dimTedit dimUpdate |" />
          <Combo label="标注样式" text="ISO-25" width="w-[120px]" pad="pl-5" />
          <Btn name="dimStyle" />
        </Bar>
        <Bar>
          <Tools list="union subtract intersect | extrude moveFace offsetFace deleteFace rotateFace taperFace copyFace colorFace | filletEdge chamferEdge copyEdge colorEdge | imprint clean separate shell check" />
        </Bar>
      </div>
      <div className="flex">
        <Bar>
          <Tools list="refEdit refSave refDiscard" />
        </Bar>
      </div>
    </div>
  );
}

function SideBar({ list }: { list: string }) {
  return (
    <aside className="flex w-6 shrink-0 flex-col items-center self-start border border-[#222933]">
      <div className="mt-[2px] mb-[2px] h-1 w-3.5 bg-[radial-gradient(#b9bcc1_40%,transparent_50%)] bg-[size:2px_2px]" />
      {list.split(" ").map((n) => (
        <button key={n} aria-label={n} className="flex h-[22px] w-full items-center justify-center">
          <Icon name={n} />
        </button>
      ))}
    </aside>
  );
}

const thin = { fill: "none", stroke: "#e8e8e8" };
const thick = { fill: "none", stroke: "#fff", strokeWidth: 3 };

function Dim({ d }: { d: string }) {
  return <path d={d} {...thin} markerStart="url(#arrow)" markerEnd="url(#arrow)" />;
}

function Leader({ d }: { d: string }) {
  return <path d={d} {...thin} markerStart="url(#arrow)" />;
}

// dimension figure, centred on x with its foot on y
function Num({ x, y, children, up = false }: { x: number; y: number; children: string; up?: boolean }) {
  return (
    <text x={x} y={y} textAnchor="middle" className="text-[14px]" transform={up ? `rotate(-90 ${x} ${y})` : undefined}>
      {children}
    </text>
  );
}

function Label({ x, y, children, className = "text-[11px]" }: { x: number; y: number; children: string; className?: string }) {
  return (
    <text x={x} y={y} dominantBaseline="central" className={className}>
      {children}
    </text>
  );
}

const stampLabels: [number, number, string][] = [
  [1307, 430, "序号"], [1340, 430, "修改内容"], [1409, 430, "日期"],
  [1312, 451, "建设单位"], [1312, 538, "工程名称"], [1312, 631, "图"], [1328, 631, "名"],
  [1317, 665, "吊挂式标牌内部结构图"], [1310, 716, "设计单位"],
  [1310, 959, "客户审核盖章"], [1310, 1056, "盖章"],
];
const stampRows: [number, string][] = [
  [784, "设 计"], [804, "校 对"], [822, "审 核"], [844, "工程编号"],
  [867, "图纸编号"], [890, "设计阶段"], [911, "比 例"], [935, "日 期"],
];
const signLabels: [number, string][] = [
  [403, "期"], [424, "日"], [474, "名"], [496, "姓"], [547, "业"], [568, "专"],
  [617, "期"], [638, "日"], [688, "名"], [709, "姓"], [761, "业"], [783, "专"],
];

function Stamp() {
  return (
    <g>
      <path d="M272.500 358.500h1173v811h-1173z" {...thin} stroke="#b0b0b0" />
      <path d="M344 373h1088v782.500H344z" {...thick} strokeWidth={4} />
      <path d="M287.500 372.500H342M287.500 372v495H342M301.500 372v424M315.500 372v424M329.500 372v424M287 443.500h55M287 514.500h55M287 584.500h55M287 655.500h55M287 725.500h55M287 796.500h55" {...thin} />
      <path d="M1305 374v781M1305 522h126M1305 618h126M1305 704h126M1305 775h126M1305 831h126M1305 946h126M1305 1042h126M1348 775v171" fill="none" stroke="#fff" strokeWidth={2} />
      <path d="M1305 389.500h126M1305 407.500h126M1305 424.500h126M1305 441.500h126M1332.500 374v67M1402.500 374v67M1305 730.500h126M1305 794.500h126M1305 813.500h126M1305 854.500h126M1305 877.500h126M1305 900.500h126M1305 923.500h126" {...thin} />
      <g className="font-bold">
        {stampLabels.map(([x, y, s]) => (
          <Label key={y + s} x={x} y={y} className="text-[10px]">{s}</Label>
        ))}
        {stampRows.map(([y, s]) =>
          s.includes(" ") ? (
            <g key={y}>
              <Label x={1311} y={y} className="text-[9px]">{s[0]}</Label>
              <Label x={1334} y={y} className="text-[9px]">{s[2]}</Label>
            </g>
          ) : (
            <Label key={y} x={1309} y={y} className="text-[9px]">{s}</Label>
          )
        )}
        {signLabels.map(([y, s]) => (
          <text key={y} x={294} y={y} textAnchor="middle" dominantBaseline="central" className="text-[9px]" transform={`rotate(-90 294 ${y})`}>{s}</text>
        ))}
        <text x="312" y="822" textAnchor="middle" dominantBaseline="central" className="text-[10px]" transform="rotate(-90 312 822)">签</text>
        <text x="312" y="846" textAnchor="middle" dominantBaseline="central" className="text-[10px]" transform="rotate(-90 312 846)">会</text>
      </g>
      <Label x={1350} y={648} className="font-['Liberation_Sans'] text-[10px]">XC-03</Label>
      <Label x={1353} y={867} className="font-['Liberation_Serif'] text-[9px] font-bold">GH-TJAT-JG-02</Label>
    </g>
  );
}

function Beam() {
  return (
    <g>
      <path d="M460.500 487.500h705v87h-705zM460.500 496.500h705M460.500 565.500h705M469.500 496v69M1157.500 496v69" {...thin} />
      <path d="M566.500 400v39M566.500 447v2M566.500 457v30M565.500 487v9M568.500 487v9M1059.500 400v39M1059.500 447v2M1059.500 457v30M1058.500 487v9M1061.500 487v9" {...thin} />
      <path d="M460.500 465v20M1165.500 465v20M460.500 577v30M1165.500 577v30M1168 487.500h19M1168 574.500h19" {...thin} />
      <Dim d="M460.500 465.500H566" />
      <Dim d="M566.500 465.500H1059" />
      <Dim d="M1060 465.500H1165" />
      <Dim d="M460.500 606.500H1165" />
      <Dim d="M1187.500 488V574" />
      <Leader d="M674 496.500L738 522.500H823" />
      <Leader d="M694 565L738 522.500" />
      <path d="M749.500 510v6.500h15V510" {...thin} />
      <Num x={514} y={466}>360</Num>
      <Num x={813} y={466}>1680</Num>
      <Num x={1113} y={466}>360</Num>
      <Num x={813} y={606}>2400</Num>
      <Num x={1187} y={531} up>295</Num>
      <text x="769" y="519" className="font-['Liberation_Serif'] text-[16px]">100</text>
      <Label x={796} y={513}>角铝</Label>
      <Label x={780} y={650} className="text-[16px]">吊挂式标识内部结构</Label>
      <path d="M781 665.500h149M781 668.500h149" {...thin} />
    </g>
  );
}

function Section() {
  return (
    <g>
      <Dim d="M518.500 696.500H543" />
      <path d="M518.500 696v82M543.500 696v82M531 704v69M518.500 731q2-10 12.500-10t12.500 10M473 720.500h58M473 781.500h22" {...thin} />
      <circle cx="531" cy="730.500" r="4" {...thin} />
      <circle cx="531" cy="756.500" r="4" {...thin} />
      <Dim d="M473.500 721V781" />
      <Leader d="M533 730.500H568" />
      <Leader d="M544 759.500H568" />
      <Leader d="M535 795.500H589" />
      <path d="M508.500 778.500h45v2h-45zM523.500 773.500h15v5h-15zM527.500 773v8M531 773v8M535.500 773v8M527.500 784v4M535.500 784v4M523.500 788.500h15v5h-15zM531 788v5M527.500 788v12h8V788" {...thin} />
      <path d="M496.500 853.500v-71h69v72.500M496.500 859.500v66h69v-64" {...thick} />
      <path d="M495 853.500c26-6 38 6 55 6 8 0 12-2 17-4M495 859.500c26-4 38 7 55 7 8 0 12-2 17-5" {...thin} strokeWidth={1.5} />
      <path d="M498 810.500h3.500v-23h59v23h3.500M498 897.500h3.500v23h59v-23h3.500" {...thin} />
      <path d="M495.500 929v35M566.500 929v35M589.500 896v6h16v-6" {...thin} />
      <Dim d="M495.500 963.500H566" />
      <Leader d="M567 878.500H690" />
      <Leader d="M544 908.500H690" />
      <Num x={533} y={694}>35</Num>
      <Num x={472} y={751} up>200</Num>
      <Num x={531} y={962}>100</Num>
      <g className="text-[18px] font-light">
        <text x="567" y="737">10mm</text>
        <text x="567" y="766">5mm</text>
        <text x="593" y="802">M8</text>
        <text x="608" y="875">2.5mm</text>
      </g>
      <text x="609" y="905" className="font-['Liberation_Serif'] text-[16px]">100</text>
      <Label x={621} y={730}>开孔</Label>
      <Label x={612} y={759}>不锈钢连接件</Label>
      <Label x={624} y={795}>螺栓连接</Label>
      <Label x={672} y={868}>铝板</Label>
      <Label x={637} y={898}>角铝</Label>
    </g>
  );
}

function Bracket() {
  return (
    <g>
      <path d="M824.500 763.500h4.500v90.500h33.500v3.500h-38zM824 782.500h5M824 785.500h5M824 826.500h5M824 830.500h5M842.500 854v3M846.500 854v3" {...thin} />
      <path d="M810.500 763.500H822M810.500 783.500H822M810.500 828.500H822M810.500 857.500H822M824.500 860v17M862.500 860v17" {...thin} />
      <Dim d="M810.500 764V783" />
      <Dim d="M810.500 784V828" />
      <Dim d="M810.500 829V857" />
      <Dim d="M825 876.500H862" />
      <Num x={810} y={772} up>30</Num>
      <Num x={810} y={806} up>100</Num>
      <Num x={810} y={843} up>70</Num>
      <Num x={845} y={875}>75</Num>
      <Label x={807} y={897}>镀锌连接件</Label>
      <path d="M779 909.500h112M779 912.500h112" {...thin} />
    </g>
  );
}

function Panel() {
  return (
    <g>
      <path d="M1012.500 735v26M1083.500 735v26" {...thin} />
      <Dim d="M1012.500 735.500H1083" />
      <Num x={1048} y={735}>100</Num>
      <path d="M1013.500 835v-71h69v73M1013.500 841v66.500h69V843" {...thick} />
      <path d="M1012 835c26-5 38 6 52 6 8 0 14-2 20-4M1012 841c26-4 38 7 52 7 8 0 14-2 20-5" {...thin} strokeWidth={1.5} />
      <circle cx="1015" cy="765" r="11" {...thin} />
      <circle cx="1083" cy="765" r="11" {...thin} />
      <circle cx="1015" cy="907" r="11" {...thin} />
      <circle cx="1079" cy="907" r="11" {...thin} />
      <Leader d="M1084 803.500H1204" />
      <Leader d="M1086 909.500H1209" />
      <text x="1122" y="800" className="text-[18px] font-light">2mm</text>
      <Label x={1168} y={793}>铝板</Label>
      <Label x={1127} y={899}>表示开槽折弯</Label>
    </g>
  );
}

const notes: [number, string, string][] = [
  [1016, "1.", "箱体结构直接在加工厂加工完成;"],
  [1046, "2.", "可采用两块铝板折弯后直接固定在内部结构架上，固定方式以美观为准;"],
  [1078, "3.", "面板采用氟碳喷涂工艺。"],
];

function Drawing() {
  return (
    <svg viewBox="33 165 1638 1124" className="absolute inset-0 h-full w-full fill-white font-['Noto_Sans_CJK_SC',sans-serif] font-normal" role="img" aria-label="drawing">
      <defs>
        <marker id="arrow" viewBox="0 0 6 4" refX="6" refY="2" markerWidth="6" markerHeight="4" markerUnits="userSpaceOnUse" orient="auto-start-reverse">
          <path d="M0 .5L6 2 0 3.500z" fill="#fff" />
        </marker>
      </defs>
      <Stamp />
      <Beam />
      <Section />
      <Bracket />
      <Panel />
      <Label x={788} y={987} className="text-[13px]">说明:</Label>
      {notes.map(([y, no, s]) => (
        <g key={no}>
          <text x="828" y={y + 9} className="text-[22px] font-light">{no}</text>
          <Label x={no === "1." ? 850 : 853} y={y} className="text-[13px]">{s}</Label>
        </g>
      ))}

      {/* UCS icon */}
      <path d="M55.500 1257.500h9v9h-9zM59.500 1212v50.500H109" {...thin} stroke="#fff" />
      <text x="67" y="1208" textAnchor="middle" className="text-[18px] font-light">Y</text>
      <text x="119" y="1261" textAnchor="middle" className="text-[18px] font-light">X</text>

      {/* view cube */}
      <circle cx="1588" cy="247" r="54" fill="none" stroke="#2b2b2b" strokeWidth="12" />
      <path d="M1562.500 221.500h51v51h-51z" fill="#a3a3a3" stroke="#777" />
      <path d="M1572 231h32v32h-32z" fill="#97989d" />
      <g textAnchor="middle" fill="#9a9a9a" className="text-[20px] font-medium">
        <text x="1588" y="199">北</text>
        <text x="1588" y="312">南</text>
        <text x="1531" y="255">西</text>
        <text x="1644" y="255">东</text>
        <text x="1588" y="258" fill="#4a4a4a" className="text-[30px]">上</text>
      </g>

      {/* crosshair */}
      <path d="M1546.500 165v1116M33 1287.500h1638M1540.500 1281.500h12v7h-12z" {...thin} stroke="#fff" />
    </svg>
  );
}

function CommandLine() {
  return (
    <div className="absolute bottom-px left-1/2 w-[926px] max-w-full -translate-x-1/2">
      <div className="flex flex-col items-start gap-[5px] pb-[2px] pl-16 font-['Liberation_Mono','Noto_Sans_CJK_SC',monospace] text-xs leading-[15px]">
        <span className="h-[15px] rounded-xs bg-[#454545] pl-0.5 pr-1 text-[#a8a8a8]">命令: _textedit</span>
        <span className="h-[15px] rounded-xs bg-[#545454] pl-0.5 pr-1 text-[#cfcfcf]">当前设置: 编辑模式 = Multiple</span>
        <span className="h-[15px] rounded-xs bg-[#626262] pl-0.5 pr-1 text-[#f4f4f4]">选择注释对象或 [放弃(U)/模式(M)]: *取消*</span>
      </div>
      <div className="flex h-[26px] border-b border-white">
        <div className="flex w-[58px] shrink-0 items-center rounded-l-sm bg-[#222933]">
          <div className="ml-1 h-4 w-[5px] bg-[radial-gradient(#b9bcc1_45%,transparent_50%)] bg-[size:3px_3px]" />
          <button aria-label="关闭命令行" className="ml-1 flex w-4 justify-center">
            <svg viewBox="0 0 10 10" className="size-2.5"><path d="M0 0l10 10M10 0L0 10" stroke="#b0b0b0" strokeWidth="2" /></svg>
          </button>
          <button aria-label="自定义" className="ml-2"><Icon name="wrench" /></button>
        </div>
        <div className="flex flex-1 items-center bg-[#b0b0b0]">
          <svg viewBox="0 0 16 12" className="ml-1 h-3 w-4">
            <path d="M.5.5h15v11H.5zM0 2h16M3 5l2 1.500L3 8M6 9h4" fill="none" stroke="#444" />
          </svg>
          <Caret className="ml-0.5 text-[#444]" />
          <input aria-label="命令" placeholder="键入命令" className="ml-1.5 h-full flex-1 text-[13px] italic outline-none placeholder:text-[#555]" />
          <button aria-label="历史" className="mr-1 rotate-180"><Caret className="text-[#444]" /></button>
        </div>
      </div>
    </div>
  );
}

function LayoutTabs() {
  return (
    <nav className="flex h-6 shrink-0 items-center pl-[19px] text-xs text-[#f0f0f0]">
      <button aria-label="布局菜单" className="mr-3.5"><Icon name="menu" /></button>
      <div className="relative flex h-full items-center px-3">
        <ActiveBg />
        <button className="relative font-bold">模型</button>
      </div>
      {["布局1", "布局2"].map((t) => (
        <React.Fragment key={t}>
          <button className="px-3">{t}</button>
          <Slash />
        </React.Fragment>
      ))}
      <button aria-label="新建布局" className="px-3.5"><Icon name="plus" size="size-3.5" /></button>
      <Slash />
    </nav>
  );
}

// names starting with * are switched on, "v" is a caret
function Cell({ list = "", className = "", children }: { list?: string; className?: string; children?: React.ReactNode }) {
  return (
    <div className={`flex h-6 shrink-0 items-center bg-[#3b4453] ${className}`}>
      {list && list.split(" ").map((n, i) =>
        n === "v" ? (
          <button key={i} aria-label="选项" className="flex w-4 justify-center"><Caret /></button>
        ) : (
          <button
            key={i}
            aria-label={n.replace("*", "")}
            className={`flex h-[22px] w-6 shrink-0 items-center justify-center ${n[0] === "*" ? "border-x border-[#3b4453] bg-[#5f8fc4]" : ""}`}
          >
            <Icon name={n.replace("*", "")} />
          </button>
        )
      )}
      {children}
    </div>
  );
}

function StatusBar() {
  return (
    <footer className="mt-1.5 mb-[5px] flex shrink-0 gap-px px-[5px] text-xs whitespace-nowrap text-[#f0f0f0]">
      <div className="mr-[3px] h-6 min-w-0 flex-1 bg-[#3b4453]" />
      <Cell className="mr-0.5 w-[180px] justify-end pr-1.5">5197.9265, -26.0456, 0.0000</Cell>
      <Cell className="mr-0.5 w-[30px] justify-center"><button>模型</button></Cell>
      <Cell list="grid dots v" className="mr-0.5" />
      <Cell list="infer" />
      <Cell list="*dyn" />
      <Cell list="ortho polar v iso v" />
      <Cell list="track *osnap v" />
      <Cell list="lwt" />
      <Cell list="*transp" />
      <Cell list="cycle" />
      <Cell list="osnap3d v" className="mr-0.5" />
      <Cell list="*ucs selFilter v *gizmo v" className="mr-0.5" />
      <Cell list="*annoVis annoAuto anno" className="mr-0.5 w-[146px]">
        <button className="flex flex-1 items-center justify-between pl-[5px] pr-1">
          1:1 / 100%
          <Caret />
        </button>
      </Cell>
      <Cell list="gear v" />
      <Cell list="plus" />
      <Cell list="ruler" className="mr-0.5 w-[97px]">
        <button className="flex flex-1 items-center justify-between pl-[5px] pr-1">
          小数
          <Caret />
        </button>
      </Cell>
      <Cell list="qprops" className="mr-0.5" />
      <Cell list="lockUi v" />
      <Cell list="isolate" className="mr-0.5" />
      <Cell list="*perf" className="mr-0.5" />
      <Cell list="trusted" className="mr-0.5 w-[30px] justify-center" />
      <Cell list="full" className="mr-px" />
      <Cell list="menu" />
    </footer>
  );
}

export default function App() {
  return (
    <div className="flex h-screen flex-col overflow-hidden rounded-lg border border-[#0091e0] bg-[#222933] font-['Open_Sans','Noto_Sans_CJK_SC',sans-serif]">
      <TitleBar />
      <MenuBar />
      <FileTabs />
      <main className="mx-[3px] flex min-h-0 flex-1 flex-col bg-[#3b4453] pb-1">
        <ToolRows />
        <div className="flex min-h-0 flex-1">
          <SideBar list="line xline pline polygon rect arc circle cloud spline ellipse ellArc insert makeBlock point hatch gradient region table mtext addSel" />
          <section className="relative ml-[5px] min-w-0 flex-1 overflow-hidden bg-black">
            <Drawing />
            <button className="absolute right-[59px] top-[169px] flex h-[18px] w-12 items-center justify-between rounded border border-[#6a6a70] bg-[#8b8b95] px-1 font-['Liberation_Sans'] text-[11px] text-[#3c3c42]">
              WCS
              <Caret className="text-[#a9a9b2]" />
            </button>
            <CommandLine />
          </section>
          <div className="ml-1 mr-1">
            <SideBar list="erase copyObj mirror offset array move rotate scale stretch trim extend breakAt breakObj join chamfer fillet blend explode" />
          </div>
        </div>
      </main>
      <LayoutTabs />
      <StatusBar />
    </div>
  );
}
